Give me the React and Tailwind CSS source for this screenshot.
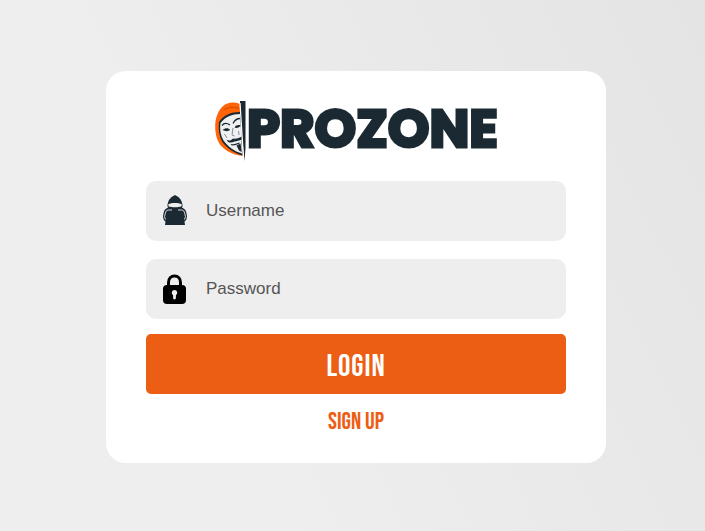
import React, { useState } from 'react';

const MaskMark = () => (
    <svg viewBox="0 0 33 60" className="h-[60px] w-[33px] shrink-0" aria-hidden="true">
        {/* Hood */}
        <path d="M26 3C20 0.500 13 1.200 8.500 5.500C4 10 1.500 17 1.200 24C1 30 2 37 5 42C10 49.500 18 53.500 28.800 55L27.500 42L26 15Z" fill="#ff6406" />
        <path d="M9.500 9C14 6 19 5.500 25 7.500" fill="none" stroke="#c94a05" strokeWidth="1" />
        <path d="M26 11C17 11 9.500 14 5 21C4.200 28 5 35 8 40.500C13 47.500 20 52 28.500 54.500Z" fill="#1b2932" />
        {/* Face */}
        <path d="M26.300 13C18 13 11 16 6.500 22C5.500 28 6.500 34.500 9.500 39.500C14 45.500 20 50.500 28 52.500Z" fill="#eef0f1" />
        <path d="M8 24.500C10 21.800 13 22 16 24M19 22.500C21 18.500 23.500 17.300 26.500 17.500" fill="none" stroke="#1b2932" strokeWidth="1.300" />
        <path d="M8.500 29C11.500 26.500 14.500 26.700 16.200 29C14 30.500 11.500 30.500 8.500 29ZM20.500 26.500C22 24 24.500 23.500 27 24.500C25 26.700 23 27.500 20.500 26.500Z" fill="#1b2932" />
        <path d="M19 27L18 34L20.500 35M10.500 33L13 37M24.500 30L25 34" fill="none" stroke="#78838a" strokeWidth="0.900" />
        <path d="M12.500 38.500C15 40.500 17 39.500 19 37.500C21.500 38 24 37.500 27.700 35.500L27.900 38.500C25 39.700 23 40 20.500 40.500C18 42 14 42.500 12.500 38.500Z" fill="#1b2932" />
        <path d="M17 43.500C19.500 44.500 22 43.500 25.500 42" fill="none" stroke="#1b2932" strokeWidth="1.200" />
        <path d="M22.500 44.500L26.500 42.500L27.700 51L25 49.500Z" fill="#1b2932" />
        {/* Blade between mask and name */}
        <path d="M26 0H31.500V47L30.500 60L26.500 19Z" fill="#1b2932" />
        <path d="M26 2L29.500 57" stroke="#ffffff" strokeWidth="1.200" />
    </svg>
);

const HackerIcon = () => (
    <svg viewBox="0 1 24 32" className="h-8 w-6" aria-hidden="true">
        <path d="M12 1C8.500 2.500 5.200 5.500 4.700 10C4.200 11.500 4.500 13 5.200 14L7 15H17L18.800 14C19.500 13 19.800 11.500 19.300 10C18.800 5.500 15.500 2.500 12 1Z" fill="#1b2932" />
        <path d="M5.200 10.300C9 8.500 15 8.500 18.800 10.300L18.300 12.600C15 13.500 9 13.500 5.700 12.600Z" fill="#eeeeee" />
        <path d="M5.500 13.500C3 14.500 1.200 15.500 0.800 18L0 22C0 24.500 1 26.800 2.500 27.500L2 31H22L21.500 27.500C23 26.800 24 24.500 24 22L23.200 18C22.800 15.500 21 14.500 18.500 13.500C14 14.500 10 14.500 5.500 13.500Z" fill="#1b2932" />
        <path d="M9 16H5.500C3.300 16.200 2.600 17.500 2.300 19.500L1.500 22.500L2.500 25.500M15 16H18.500C20.700 16.200 21.400 17.500 21.700 19.500L22.500 22.500L21.500 25.500" fill="none" stroke="#eeeeee" strokeWidth="0.900" />
    </svg>
);

const LockIcon = () => (
    <svg viewBox="0 -1 24 32" className="h-8 w-6" aria-hidden="true">
        <path d="M5.500 14V8.500C5.500 4.500 8 2 11.500 2S17.500 4.500 17.500 8.500V14" fill="none" stroke="#000000" strokeWidth="3" />
        <rect x="0" y="11" width="23" height="19" rx="4" fill="#000000" />
        <path d="M11.500 16A2.800 2.800 0 0 1 12.900 21.200V24A1.400 1.400 0 0 1 10.100 24V21.200A2.800 2.800 0 0 1 11.500 16Z" fill="#eeeeee" />
    </svg>
);

const Field = ({ id, type, label, icon, value, onChange }) => (
    <label htmlFor={id} className="flex h-[60px] items-center gap-[19px] rounded-[10px] bg-[#eeeeee] pl-[17px] pr-5">
        {icon}
        <input
            id={id}
            type={type}
            aria-label={label}
            placeholder={label}
            value={value}
            onChange={(e) => onChange(e.target.value)}
            className="min-w-0 flex-1 bg-transparent text-[17px] text-[#1b2932] outline-none placeholder:text-[#555555]"
        />
    </label>
);

const App = () => {
    const [username, setUsername] = useState('');
    const [password, setPassword] = useState('');

    return (
        <main className="flex min-h-screen items-center justify-center bg-[linear-gradient(64deg,#eeeeee_32%,#e4e4e4_100%)] pt-[3px] pl-[7px] font-['Liberation_Sans',Arial,sans-serif]">
            <form
                onSubmit={(e) => e.preventDefault()}
                className="w-full max-w-[500px] rounded-[20px] bg-white px-10 pt-[30px] pb-7"
            >
                <h1 className="mb-5 flex h-[60px] items-center justify-center whitespace-nowrap">
                    <MaskMark />
                    <span className="pb-1 font-['Poppins','Lato',sans-serif] text-[53px] leading-[56px] font-bold text-[#1b2932] [-webkit-text-stroke:3px_#1b2932]">PROZONE</span>
                </h1>

                <div className="flex flex-col gap-[18px]">
                    <Field id="username" type="text" label="Username" icon={<HackerIcon />} value={username} onChange={setUsername} />
                    <Field id="password" type="password" label="Password" icon={<LockIcon />} value={password} onChange={setPassword} />
                </div>

                <button
                    type="submit"
                    className="mt-[15px] h-[60px] w-full rounded-[5px] bg-[#ed5e15] pt-[6px] font-['Bebas_Neue',sans-serif] text-[31px] tracking-[1px] text-white"
                >
                    LOGIN
                </button>
                <div className="mt-[13px] -mb-px text-center">
                    <a
                        href="#signup"
                        className="font-['Bebas_Neue',sans-serif] text-2xl leading-[29px] text-[#ed5e15]"
                    >
                        SIGN UP
                    </a>
                </div>
            </form>
        </main>
    );
};

export default App;
